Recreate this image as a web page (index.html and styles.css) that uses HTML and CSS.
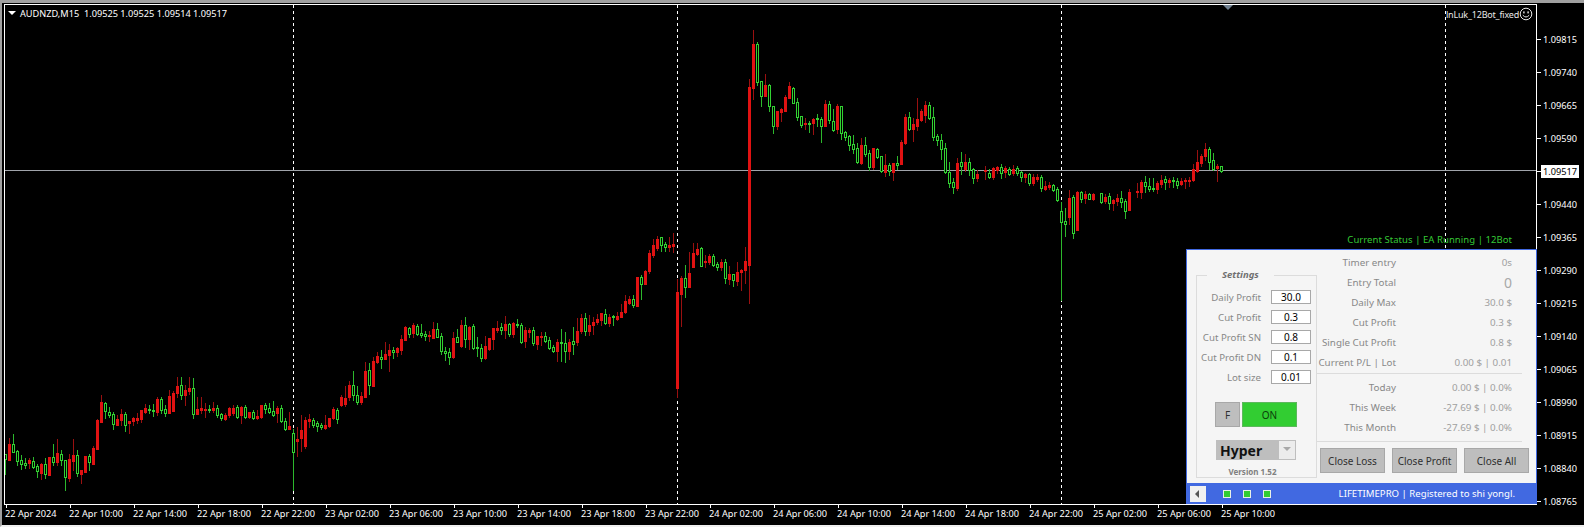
FILE: index.html
```html
<!DOCTYPE html>
<html>
<head>
  <meta charset="utf-8">
  <title>AUDNZD,M15</title>
  <link rel="stylesheet" href="styles.css">
</head>
<body>

<div class="terminal">
  <div class="chart-row">

    <!-- График -->
    <div class="plot">
      <svg class="plot-svg" id="plotSvg" width="1531" height="499" xmlns="http://www.w3.org/2000/svg">
        <line class="sep" x1="288.5" y1="0" x2="288.5" y2="499"/>
        <line class="sep" x1="672.5" y1="0" x2="672.5" y2="499"/>
        <line class="sep" x1="1056.5" y1="0" x2="1056.5" y2="499"/>
        <line class="sep" x1="1440.5" y1="0" x2="1440.5" y2="499"/>
        <line class="bid" x1="0" y1="165.5" x2="1531" y2="165.5"/>
        <g id="candles"></g>
      </svg>

      <div class="legend">
        <span class="legend-arrow"></span>
        <span>AUDNZD,M15&nbsp; 1.09525 1.09525 1.09514 1.09517</span>
      </div>
      <span class="shift-mark"></span>
      <div class="ea-name">
        <span>lnLuk_12Bot_fixed</span>
        <svg width="14" height="14" viewBox="0 0 14 14" xmlns="http://www.w3.org/2000/svg">
          <circle cx="7" cy="7" r="5.8" fill="none" stroke="#e8e8e8" stroke-width="1"/>
          <rect x="4.2" y="4.4" width="1.4" height="2" fill="#e8e8e8"/>
          <rect x="8.4" y="4.4" width="1.4" height="2" fill="#e8e8e8"/>
          <path d="M3.8 8.2 Q7 11.8 10.2 8.2" fill="none" stroke="#e8e8e8" stroke-width="1"/>
        </svg>
      </div>
      <div class="ea-status">Current Status | EA Running | 12Bot</div>

      <!-- Панель советника -->
      <div class="panel">
        <div class="panel-body">
          <fieldset class="settings">
            <legend>Settings</legend>
            <div class="field"><label>Daily Profit</label><span class="input">30.0</span></div>
            <div class="field"><label>Cut Profit</label><span class="input">0.3</span></div>
            <div class="field"><label>Cut Profit SN</label><span class="input">0.8</span></div>
            <div class="field"><label>Cut Profit DN</label><span class="input">0.1</span></div>
            <div class="field"><label>Lot size</label><span class="input">0.01</span></div>
            <div class="toggles">
              <span class="btn btn-f">F</span>
              <span class="btn btn-on">ON</span>
            </div>
            <div class="combo">
              <span class="combo-text">Hyper</span>
              <span class="combo-arrow"></span>
            </div>
            <div class="version">Version 1.52</div>
          </fieldset>

          <div class="stats">
            <div class="stat"><span class="stat-name">Timer entry</span><span class="stat-val">0s</span></div>
            <div class="stat"><span class="stat-name">Entry Total</span><span class="stat-val stat-big">0</span></div>
            <div class="stat"><span class="stat-name">Daily Max</span><span class="stat-val">30.0 $</span></div>
            <div class="stat"><span class="stat-name">Cut Profit</span><span class="stat-val">0.3 $</span></div>
            <div class="stat"><span class="stat-name">Single Cut Profit</span><span class="stat-val">0.8 $</span></div>
            <div class="stat"><span class="stat-name">Current P/L | Lot</span><span class="stat-val">0.00 $ | 0.01</span></div>
            <div class="divider"></div>
            <div class="stat"><span class="stat-name">Today</span><span class="stat-val">0.00 $ | 0.0%</span></div>
            <div class="stat"><span class="stat-name">This Week</span><span class="stat-val">-27.69 $ | 0.0%</span></div>
            <div class="stat"><span class="stat-name">This Month</span><span class="stat-val">-27.69 $ | 0.0%</span></div>
            <div class="divider divider-low"></div>
            <div class="actions">
              <span class="btn btn-close">Close Loss</span>
              <span class="btn btn-close">Close Profit</span>
              <span class="btn btn-close">Close All</span>
            </div>
          </div>
        </div>

        <div class="panel-footer">
          <span class="collapse"></span>
          <span class="led"></span>
          <span class="led"></span>
          <span class="led"></span>
          <span class="footer-text">LIFETIMEPRO | Registered to shi yongl.</span>
        </div>
      </div>
    </div>

    <!-- Шкала цены -->
    <div class="price-axis">
      <div class="price">1.09815</div>
      <div class="price">1.09740</div>
      <div class="price">1.09665</div>
      <div class="price">1.09590</div>
      <div class="price price-now"><span>1.09517</span></div>
      <div class="price">1.09440</div>
      <div class="price">1.09365</div>
      <div class="price">1.09290</div>
      <div class="price">1.09215</div>
      <div class="price">1.09140</div>
      <div class="price">1.09065</div>
      <div class="price">1.08990</div>
      <div class="price">1.08915</div>
      <div class="price">1.08840</div>
      <div class="price">1.08765</div>
    </div>
  </div>

  <!-- Шкала времени -->
  <div class="time-axis">
    <span class="time">22 Apr 2024</span>
    <span class="time">22 Apr 10:00</span>
    <span class="time">22 Apr 14:00</span>
    <span class="time">22 Apr 18:00</span>
    <span class="time">22 Apr 22:00</span>
    <span class="time">23 Apr 02:00</span>
    <span class="time">23 Apr 06:00</span>
    <span class="time">23 Apr 10:00</span>
    <span class="time">23 Apr 14:00</span>
    <span class="time">23 Apr 18:00</span>
    <span class="time">23 Apr 22:00</span>
    <span class="time">24 Apr 02:00</span>
    <span class="time">24 Apr 06:00</span>
    <span class="time">24 Apr 10:00</span>
    <span class="time">24 Apr 14:00</span>
    <span class="time">24 Apr 18:00</span>
    <span class="time">24 Apr 22:00</span>
    <span class="time">25 Apr 02:00</span>
    <span class="time">25 Apr 06:00</span>
    <span class="time">25 Apr 10:00</span>
  </div>
</div>

<script src="chart.js"></script>
</body>
</html>
```
FILE: styles.css
```css
html, body {
  margin: 0;
  padding: 0;
  background: #000;
}
body {
  width: 1584px;
  height: 527px;
  overflow: hidden;
  font-family: "Noto Sans", sans-serif;
}

/* Окно терминала */
.terminal {
  box-sizing: border-box;
  width: 1584px;
  height: 527px;
  padding: 1px 0 0 2px;
  border-top: 3px solid #a0a0a0;
  border-left: 2px solid #a0a0a0;
  border-bottom: 2px solid #f0f0f0;
  background: #000;
}
.chart-row {
  display: flex;
  height: 501px;
}

/* График */
.plot {
  position: relative;
  box-sizing: border-box;
  width: 1533px;
  height: 501px;
  border: 1px solid #fff;
  flex: none;
}
.plot-svg {
  position: absolute;
  left: 0;
  top: 0;
  shape-rendering: crispEdges;
}
.sep {
  stroke: #fff;
  stroke-width: 1;
  stroke-dasharray: 3 3;
}
.bid {
  stroke: #a0a4aa;
  stroke-width: 1;
}

.legend {
  position: absolute;
  left: 3px;
  top: 1px;
  display: flex;
  align-items: center;
  gap: 4px;
  height: 14px;
  color: #fff;
  font-size: 9.2px;
  white-space: nowrap;
}
.legend-arrow {
  width: 0;
  height: 0;
  border-left: 4px solid transparent;
  border-right: 4px solid transparent;
  border-top: 4px solid #fff;
}
.shift-mark {
  position: absolute;
  left: 1218px;
  top: 0;
  width: 0;
  height: 0;
  border-left: 5px solid transparent;
  border-right: 5px solid transparent;
  border-top: 5px solid #708090;
}
.ea-name {
  position: absolute;
  right: 3px;
  top: 2px;
  display: flex;
  align-items: center;
  gap: 0;
  color: #e8e8e8;
  font-size: 9px;
  letter-spacing: -.2px;
}
.ea-status {
  position: absolute;
  right: 24px;
  top: 228px;
  color: #35c835;
  font-size: 9.5px;
  letter-spacing: .06px;
  line-height: 14px;
  white-space: nowrap;
}

/* Панель советника */
.panel {
  position: absolute;
  left: 1181px;
  top: 244px;
  box-sizing: border-box;
  width: 351px;
  height: 255px;
  border: 1px solid #4169e1;
  border-bottom: 0;
  background: #f5f5f5;
  display: flex;
  flex-direction: column;
}
.panel-body {
  display: flex;
  height: 233px;
  padding-left: 9px;
}

.settings {
  box-sizing: border-box;
  width: 121px;
  height: 209px;
  margin: 19px 0 0 0;
  padding: 0;
  border: 1px solid #dcdcdc;
  flex: none;
}
.settings legend {
  margin: 0 0 0 10px;
  padding: 0 15px;
  color: #707070;
  font-size: 9.5px;
  font-weight: bold;
  font-style: italic;
  line-height: 12px;
}
.field {
  display: flex;
  align-items: center;
  height: 20px;
}
.field:first-of-type {
  margin-top: 6px;
}
.field label {
  width: 64px;
  margin-right: 10px;
  text-align: right;
  color: #888;
  font-size: 9.7px;
  white-space: nowrap;
}
.input {
  box-sizing: border-box;
  width: 40px;
  height: 14px;
  border: 1px solid #a8a8a8;
  background: #fff;
  color: #000;
  font-size: 10px;
  line-height: 12px;
  text-align: center;
}

.btn {
  box-sizing: border-box;
  display: flex;
  align-items: center;
  justify-content: center;
  height: 25px;
  border: 1px solid #a8a8a8;
  background: #bebebe;
  color: #303030;
  font-size: 10px;
}
.toggles {
  display: flex;
  gap: 2px;
  margin: 15px 0 0 18px;
}
.btn-f {
  width: 25px;
}
.btn-on {
  width: 55px;
  background: #32cd32;
  border-color: #5cb85c;
  color: #0a3d0a;
}

.combo {
  box-sizing: border-box;
  display: flex;
  align-items: center;
  justify-content: space-between;
  width: 80px;
  height: 20px;
  margin: 13px 0 0 19px;
  background: #bebebe;
  padding: 1px;
}
.combo-text {
  margin-left: 3px;
  color: #111;
  font-size: 14px;
  font-weight: bold;
}
.combo-arrow {
  position: relative;
  width: 16px;
  height: 18px;
  background: #ececec;
}
.combo-arrow:before {
  position: absolute;
  content: "";
  left: 4px;
  top: 6px;
  border-left: 4px solid transparent;
  border-right: 4px solid transparent;
  border-top: 4px solid #a8a8a8;
}
.version {
  margin-top: 6px;
  padding-right: 8px;
  text-align: center;
  color: #808080;
  font-size: 8px;
  font-weight: bold;
}

/* Правая колонка */
.stats {
  width: 220px;
  padding-top: 2px;
}
.stat {
  display: flex;
  align-items: center;
  height: 20px;
  font-size: 9.8px;
  white-space: nowrap;
}
.stat-name {
  width: 79px;
  text-align: right;
  color: #888;
}
.stat-val {
  width: 116px;
  text-align: right;
  color: #a0a0a0;
}
.stat-big {
  font-size: 14px;
  color: #a8a8a8;
}
.divider {
  width: 205px;
  height: 1px;
  margin: 1px 0 3px;
  background: #dcdcdc;
}
.divider-low {
  margin: 4px 0 6px;
}
.actions {
  display: flex;
  gap: 7px;
  margin-left: 3px;
}
.btn-close {
  width: 65px;
}

.panel-footer {
  display: flex;
  align-items: center;
  height: 21px;
  background: #4169e1;
}
.collapse {
  position: relative;
  width: 16px;
  height: 16px;
  margin-left: 3px;
  margin-right: 17px;
  background: #f0f0f0;
}
.collapse:before {
  position: absolute;
  content: "";
  left: 5px;
  top: 4px;
  border-top: 4px solid transparent;
  border-bottom: 4px solid transparent;
  border-right: 4px solid #555;
}
.led {
  box-sizing: border-box;
  width: 8px;
  height: 8px;
  margin-right: 12px;
  border: 1px solid #e8f0e8;
  background: #32cd32;
}
.footer-text {
  margin-left: auto;
  margin-right: 21px;
  color: #fff;
  font-size: 9.6px;
  white-space: nowrap;
}

/* Шкала цены */
.price-axis {
  flex: 1;
  padding-top: 19px;
}
.price {
  display: flex;
  align-items: center;
  height: 33px;
  color: #fff;
  font-size: 9.2px;
}
.price:before {
  content: "";
  width: 4px;
  height: 1px;
  margin-right: 2px;
  background: #fff;
}
.price-now span {
  margin-left: -2px;
  padding: 0 2px;
  background: #fff;
  color: #000;
}

/* Шкала времени */
.time-axis {
  display: flex;
  padding-left: 1px;
  height: 19px;
}
.time {
  position: relative;
  width: 64px;
  flex: none;
  box-sizing: border-box;
  padding-top: 2px;
  color: #fff;
  font-size: 9.2px;
  white-space: nowrap;
}
.time:before {
  position: absolute;
  content: "";
  left: 1px;
  top: 0;
  width: 1px;
  height: 3px;
  background: #fff;
}
```
FILE: chart.js
```js
// Свечи: цвет, верх тела, низ тела, верх тени, низ тени (пиксели окна). "-" = пусто
var data = "g454,459,454,474 r444,460,438,460 g444,452,434,452 g451,461,450,465 g460,464,455,469 g463,465,458,468 r460,463,458,468 g461,467,457,468 g466,471,464,477 r464,473,463,479 g464,474,458,478 r457,475,457,475 g457,462,444,465 r453,462,439,465 g454,460,450,465 g460,477,460,490 " +
  "r459,478,454,481 r455,461,439,470 g455,473,450,476 r470,474,470,483 r456,472,456,472 g456,462,454,470 r448,464,446,464 r420,449,419,449 r402,422,395,422 g403,411,402,418 g412,415,407,417 g414,424,412,429 r419,425,415,425 r414,420,409,425 g414,425,412,431 r421,423,421,433 " +
  "r418,421,417,425 r418,420,413,423 r410,419,410,422 r408,412,404,413 g409,410,405,413 g410,410,404,416 r399,412,397,415 g399,410,397,413 g409,413,405,416 r396,413,390,413 r393,411,391,411 r386,393,377,397 g385,395,377,399 r390,395,385,405 r388,391,377,394 g388,414,378,418 " +
  "r409,414,397,414 r408,410,397,413 r409,410,403,417 g409,410,405,412 r408,410,402,412 g408,415,405,417 g414,418,413,420 r415,419,413,420 r408,415,407,417 r408,413,405,415 g407,417,405,418 r407,415,406,423 g407,417,405,418 r412,417,412,418 g412,418,410,419 r416,418,410,419 " +
  "r405,417,405,418 g405,409,403,413 g408,412,403,413 g411,415,401,416 r408,413,406,422 g408,421,405,422 g421,429,418,430 r426,429,412,429 g433,452,429,490 r439,441,427,456 r430,438,415,451 r420,446,417,448 r419,421,414,427 g420,425,418,427 g423,426,421,431 g425,427,423,429 " +
  "r425,428,415,429 r418,426,418,427 r409,418,407,419 g410,419,408,423 r397,405,395,406 r398,404,386,406 r385,397,381,400 g385,395,371,400 g395,402,386,404 r396,402,392,404 r371,397,362,397 g370,385,363,394 r361,386,357,386 r356,362,352,363 g357,359,350,368 r354,359,342,359 " +
  "r350,355,344,371 g350,352,347,358 r348,352,347,356 r339,350,335,354 r327,340,326,340 g328,334,327,337 r325,333,323,337 g326,334,324,335 g333,335,324,337 g334,336,331,340 r335,336,331,341 r329,338,322,338 g329,337,323,337 g336,351,333,354 g351,353,347,360 g352,357,348,364 " +
  "r338,357,332,358 g337,342,329,342 r325,346,320,347 g325,339,317,347 r327,339,326,349 g326,348,324,349 g347,348,337,356 g348,358,344,361 r346,358,336,359 r338,349,338,350 r328,339,328,349 r328,330,321,332 g327,330,323,334 r324,330,316,338 g324,334,323,336 r323,334,322,337 " +
  "g324,325,319,327 g325,342,323,343 r330,341,327,347 r330,332,328,337 g330,343,327,345 r336,344,336,349 r336,337,332,345 g336,341,332,342 g340,348,337,349 g347,351,345,352 r342,351,339,361 g342,343,329,361 g343,351,332,362 r342,351,339,359 g341,344,327,354 r331,342,318,345 " +
  "r318,331,314,333 g318,331,313,335 r325,331,315,335 r322,325,317,334 r319,322,314,324 r313,320,313,325 g314,323,309,324 r317,323,314,326 g316,317,315,325 r316,319,312,320 r312,317,304,317 r301,312,295,313 r299,303,296,304 g299,305,295,307 r277,306,277,306 g277,284,275,299 " +
  "r271,284,270,284 r253,271,250,273 r245,255,239,257 r239,248,236,250 g237,245,237,251 g244,247,242,251 r245,247,237,251 r244,246,233,252 r292,388,279,397 r278,294,276,326 g278,287,265,297 r273,287,252,287 r253,267,243,267 r249,254,243,255 g248,266,247,266 r261,262,255,267 " +
  "r256,262,254,264 g256,265,254,266 g264,267,262,270 r262,267,259,270 g262,278,259,283 r274,279,266,284 g274,280,274,286 r272,281,262,285 r270,272,269,290 r261,270,247,283 r87,265,79,303 r44,88,30,99 g44,82,42,85 g81,96,81,106 r85,96,74,96 g85,106,84,111 " +
  "g106,126,106,133 r111,126,111,129 r109,112,108,121 r97,111,95,111 r86,98,82,98 g88,103,87,103 g102,117,98,120 g116,125,116,127 r123,124,118,129 g123,124,121,132 r119,123,118,134 g118,119,114,126 g119,126,117,142 r104,126,100,126 g104,120,101,123 g121,130,109,131 " +
  "r106,129,104,133 g106,133,106,139 g132,137,131,140 g136,145,135,150 g144,149,135,153 g148,162,143,163 r145,163,138,164 g145,154,137,156 g153,167,150,170 r148,167,148,169 g149,157,148,158 g156,171,156,172 r165,172,154,176 g165,171,163,175 r163,172,163,180 g163,165,156,169 " +
  "r142,164,140,164 r117,143,114,144 g117,129,112,130 r124,129,118,141 r119,126,98,130 r111,120,109,121 r105,115,101,122 g105,118,102,119 g117,137,107,140 g136,140,134,145 g140,149,134,159 g148,172,143,173 g172,183,162,187 g182,187,178,193 r163,188,158,190 g162,166,152,174 " +
  "r162,169,154,171 g162,170,158,175 g169,178,168,183 r174,178,170,181 - r170,171,166,179 g173,177,169,178 r168,177,167,179 r167,170,166,173 g167,173,164,178 r168,172,166,177 g169,174,167,175 r169,173,165,175 g168,173,166,175 g172,177,171,181 r174,177,173,182 " +
  "g174,183,173,185 r177,183,174,185 r177,179,174,181 g177,188,175,191 r186,189,181,190 r185,187,182,189 g185,190,184,191 g189,200,187,201 g211,222,202,300 g221,224,208,236 r198,217,190,224 g197,233,195,238 r192,230,191,230 g192,199,191,202 r194,198,191,203 g194,199,193,199 " +
  "r194,199,193,200 - g193,202,193,203 r197,201,194,203 g196,203,193,209 r200,203,199,210 r198,201,194,205 g198,202,191,207 g201,211,199,218 r192,210,189,210 - r191,192,183,197 r182,192,180,198 g182,186,176,192 g186,189,178,191 g188,189,178,191 " +
  "r183,189,181,193 r180,184,175,187 g179,182,176,189 r180,182,178,187 g180,181,177,187 g181,185,178,188 r181,184,178,185 r180,181,178,188 r180,181,177,186 r169,180,164,181 r162,171,150,172 r156,163,154,166 r149,156,143,160 g149,162,147,169 g160,169,153,170 r166,168,164,181 g166,171,166,172";

var NS = "http://www.w3.org/2000/svg";
var group = document.getElementById("candles");

function rect(x, y, w, h, fill) {
  var r = document.createElementNS(NS, "rect");
  r.setAttribute("x", x);
  r.setAttribute("y", y);
  r.setAttribute("width", w);
  r.setAttribute("height", h);
  r.setAttribute("fill", fill);
  group.appendChild(r);
}

data.split(" ").forEach(function (item, i) {
  if (item === "-") return;
  var green = item.charAt(0) === "g";
  var v = item.slice(1).split(",").map(function (n) { return Number(n) - 5; });
  var x = i * 4;
  var h = Math.max(v[1] - v[0], 1);

  // тень
  rect(x, v[2], 1, v[3] - v[2] + 1, green ? "#2cb82c" : "#9a1010");
  // тело
  rect(x - 1, v[0], 3, h + 1, green ? "#32d232" : "#e01212");
  if (green && h > 1) {
    rect(x, v[0] + 1, 1, h - 1, "#000");
  }
});
```
